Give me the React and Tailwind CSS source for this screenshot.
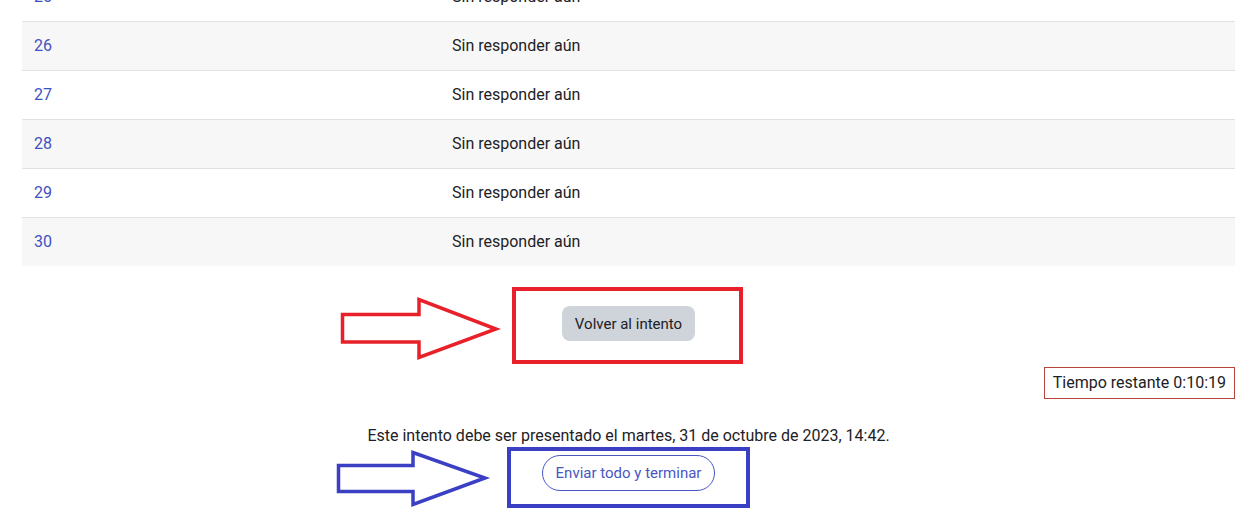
const rows = [
  { n: 25, striped: false },
  { n: 26, striped: true },
  { n: 27, striped: false },
  { n: 28, striped: true },
  { n: 29, striped: false },
  { n: 30, striped: true },
];

const Annotations = () => (
  <svg
    className="absolute inset-0 pointer-events-none"
    width="1257"
    height="512"
    viewBox="0 0 1257 512"
  >
    {/* red arrow + box around "Volver al intento" */}
    <polygon
      points="342.5,314.5 419,314.5 419,299.5 496,329 419,357.5 419,342 342.5,342"
      fill="none"
      stroke="#e8202a"
      strokeWidth="3.5"
      strokeLinejoin="miter"
    />
    <rect x="514" y="289" width="227" height="73" fill="none" stroke="#e8202a" strokeWidth="4" />

    {/* blue arrow + box around "Enviar todo y terminar" */}
    <polygon
      points="338.5,465.5 413,465.5 413,452.5 485,478 413,504.5 413,491.5 338.5,491.5"
      fill="none"
      stroke="#3a3fc4"
      strokeWidth="3.5"
      strokeLinejoin="miter"
    />
    <rect x="509" y="449" width="239" height="57" fill="none" stroke="#3a3fc4" strokeWidth="4" />
  </svg>
);

const App = () => {
  return (
    <div
      className="relative w-full h-[512px] overflow-hidden bg-white text-[16px] text-[#1d2125]"
      style={{ fontFamily: "Roboto, 'Liberation Sans', sans-serif" }}
    >
      {/* Summary table */}
      <div className="px-[22px] mt-[-28px]">
        {rows.map((row) => (
          <div
            key={row.n}
            className={`flex items-center h-[49px] border-t border-[#dee2e6] ${
              row.striped ? "bg-[#f7f7f7]" : "bg-white"
            }`}
          >
            <div className="w-[418px] pl-3 text-[#3f51c2]">{row.n}</div>
            <div className="pl-3">Sin responder aún</div>
          </div>
        ))}
      </div>

      {/* Return button */}
      <div className="flex justify-center mt-[40px]">
        <button className="h-[35px] px-[13px] rounded-lg bg-[#ced4da] text-[#1d2125] text-[15px] leading-[22px]">
          Volver al intento
        </button>
      </div>

      {/* Timer */}
      <div className="flex justify-end px-[22px] mt-[26px]">
        <div className="h-[32px] flex items-center px-[8px] border border-[#b5443a]">
          Tiempo restante 0:10:19
        </div>
      </div>

      {/* Due date + submit */}
      <div className="flex flex-col items-center mt-[25px]">
        <p className="leading-[24px]">
          Este intento debe ser presentado el martes, 31 de octubre de 2023, 14:42.
        </p>
        <button className="mt-[7px] h-[36px] px-[13px] rounded-full border border-[#4856c4] text-[#4856c4] text-[15px] leading-[22px]">
          Enviar todo y terminar
        </button>
      </div>

      <Annotations />
    </div>
  );
};

export default App;
